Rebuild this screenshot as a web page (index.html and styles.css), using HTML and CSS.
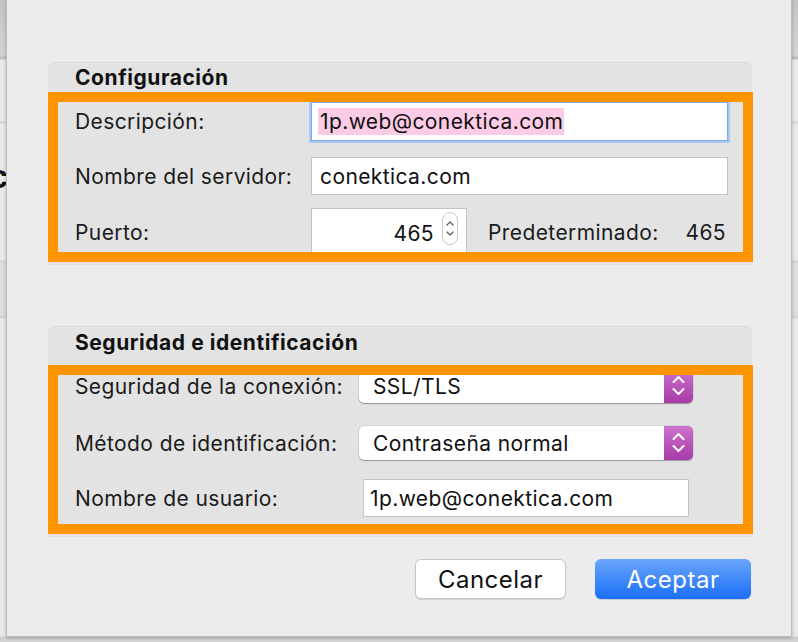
FILE: index.html
```html
<!DOCTYPE html>
<html lang="es">
<head>
<meta charset="utf-8">
<title>Configuración</title>
<link rel="stylesheet" href="styles.css">
</head>
<body>
<div class="under-c">c</div>
<div class="sheet">
  <section class="group g1">
    <h2 class="group-title">Configuración</h2>
    <div class="hl hl1">
      <div class="row row-desc">
        <span class="label">Descripción:</span>
        <div class="field focus"><span class="sel">1p.web@conektica.com</span></div>
      </div>
      <div class="row row-server">
        <span class="label">Nombre del servidor:</span>
        <div class="field">conektica.com</div>
      </div>
      <div class="row row-port">
        <span class="label">Puerto:</span>
        <div class="field port">
          <span class="num">465</span>
          <svg class="stepper" width="16" height="33" viewBox="0 0 16 33">
            <rect x="0.5" y="0.5" width="15" height="32" rx="7.5" fill="#fff" stroke="#c9c9c9"/>
            <path d="M5 13 L8 10 L11 13" fill="none" stroke="#5a5a5a" stroke-width="1.2" stroke-linecap="round" stroke-linejoin="round"/>
            <path d="M5 20 L8 23 L11 20" fill="none" stroke="#5a5a5a" stroke-width="1.2" stroke-linecap="round" stroke-linejoin="round"/>
          </svg>
        </div>
        <span class="default">Predeterminado:</span>
        <span class="defnum">465</span>
      </div>
    </div>
  </section>

  <section class="group g2">
    <h2 class="group-title">Seguridad e identificación</h2>
    <div class="hl hl2">
      <div class="row row-sec">
        <span class="label">Seguridad de la conexión:</span>
        <div class="popup">
          <span class="popup-text">SSL/TLS</span>
          <span class="arrows">
            <svg width="29" height="34" viewBox="0 0 29 34">
              <path d="M9.5 13 L14.5 8 L19.5 13" fill="none" stroke="#fff" stroke-width="2" stroke-linecap="round" stroke-linejoin="round"/>
              <path d="M9.5 20 L14.5 25 L19.5 20" fill="none" stroke="#fff" stroke-width="2" stroke-linecap="round" stroke-linejoin="round"/>
            </svg>
          </span>
        </div>
      </div>
      <div class="row row-auth">
        <span class="label">Método de identificación:</span>
        <div class="popup">
          <span class="popup-text">Contraseña normal</span>
          <span class="arrows">
            <svg width="29" height="34" viewBox="0 0 29 34">
              <path d="M9.5 13 L14.5 8 L19.5 13" fill="none" stroke="#fff" stroke-width="2" stroke-linecap="round" stroke-linejoin="round"/>
              <path d="M9.5 20 L14.5 25 L19.5 20" fill="none" stroke="#fff" stroke-width="2" stroke-linecap="round" stroke-linejoin="round"/>
            </svg>
          </span>
        </div>
      </div>
      <div class="row row-user">
        <span class="label">Nombre de usuario:</span>
        <div class="field user">1p.web@conektica.com</div>
      </div>
    </div>
  </section>

  <div class="actions">
    <button class="btn btn-cancel">Cancelar</button>
    <button class="btn btn-ok">Aceptar</button>
  </div>
</div>
</body>
</html>
```

FILE: styles.css
```css
* { box-sizing: border-box; }

html, body { margin: 0; padding: 0; }

body {
  width: 798px;
  height: 642px;
  overflow: hidden;
  position: relative;
  font-family: Inter, "Noto Sans", "Liberation Sans", sans-serif;
  color: #1b1b1b;
  background: linear-gradient(to bottom,
    #c4c4c4 0, #d3d3d3 56px, #bcbcbc 57px, #bcbcbc 59px, #e9e9e9 60px,
    #e9e9e9 121px, #cdcdcd 122px, #e9e9e9 124px,
    #e9e9e9 260px, #cfcfcf 261px, #dddddd 263px, #dddddd 316px,
    #cbcbcb 317px, #e9e9e9 319px, #e9e9e9 636px, #cfcfcf 637px, #d4d4d4 642px);
}

.under-c {
  position: absolute;
  left: -11px;
  top: 156px;
  font-family: "Liberation Sans", sans-serif;
  font-weight: 700;
  font-size: 34px;
  line-height: 40px;
  color: #111;
}

.sheet {
  position: relative;
  margin-left: 6px;
  width: 786px;
  height: 637px;
  background: #ececec;
  border: 1px solid #bdbdbd;
  border-top: none;
  box-shadow: 0 1px 3px rgba(0, 0, 0, 0.25);
  padding: 62px 39px 0 41px;
}

.group {
  background: #e3e3e3;
  border-top: 1px solid #d9d9d9;
  border-radius: 7px 7px 0 0;
  box-shadow: 0 1px 1px rgba(0, 0, 0, 0.06);
}

.g1 { height: 202px; }
.g2 { height: 210px; margin-top: 62px; }

.group-title {
  margin: 0;
  padding-left: 27px;
  font-size: 21px;
  letter-spacing: 0.55px;
  font-weight: 700;
  color: #111;
}
.g1 .group-title { height: 29px; line-height: 29px; }
.g2 .group-title { height: 38px; line-height: 31px; }

.hl {
  border: 10px solid #fe9400;
  margin-right: -1px;
  overflow: hidden;
  padding: 0 15px 0 17px;
}
.hl1 { height: 170px; }
.hl2 { height: 169px; }

.row {
  display: flex;
  align-items: center;
  font-size: 21px;
  letter-spacing: 0.4px;
}

.label { flex: none; }

.hl1 .label { width: 236px; }
.hl2 .label { width: 284px; }

.row-desc { height: 39px; }
.row-server { height: 38px; margin-top: 16px; }
.row-port { height: 50px; margin-top: 13px; align-items: flex-start; }
.row-port .label, .row-port .default, .row-port .defnum { line-height: 50px; }

.field {
  height: 100%;
  flex: 1;
  display: flex;
  align-items: center;
  background: #fff;
  border: 1px solid #c4c4c4;
  padding-left: 8px;
  color: #111;
}

.field.focus {
  border-color: #7ea9e8;
  box-shadow: 0 0 0 2px #a9c9f4;
  padding-left: 6px;
}

.sel {
  background: #fccbe5;
  padding: 3px 1px 3px 2px;
  line-height: 21px;
}

.field.port {
  flex: none;
  width: 156px;
  justify-content: flex-end;
  align-items: flex-start;
  padding: 2px 8px 0 0;
}
.port .num { line-height: 46px; margin-right: 8px; }
.port .stepper { margin-top: 1px; }

.default { margin-left: 21px; }
.defnum { margin-left: auto; margin-right: 2px; }

.row-sec { height: 34px; margin-top: -6px; }
.row-auth { height: 34px; margin-top: 23px; }
.row-user { height: 38px; margin-top: 19px; }

.popup {
  width: 334px;
  height: 34px;
  display: flex;
  align-items: center;
  background: #fff;
  border-radius: 5px;
  box-shadow: 0 1px 1px rgba(0, 0, 0, 0.3), 0 0 0 0.5px rgba(0, 0, 0, 0.12);
}
.popup-text { padding-left: 14px; flex: 1; color: #111; }
.arrows {
  width: 29px;
  height: 34px;
  border-radius: 0 5px 5px 0;
  background: linear-gradient(to bottom, #cc72cc, #a73ba8);
  display: flex;
}

.field.user {
  flex: none;
  width: 326px;
  margin-left: 4px;
  padding-left: 6px;
}

.actions {
  display: flex;
  justify-content: flex-end;
  gap: 29px;
  margin-top: 23px;
  margin-right: 1px;
}

.btn {
  font-family: Inter, "Noto Sans", "Liberation Sans", sans-serif;
  font-size: 24px;
  letter-spacing: 0.5px;
  height: 40px;
  border-radius: 6px;
  padding: 0;
  cursor: default;
}
.btn-cancel {
  width: 151px;
  background: #fff;
  color: #111;
  border: 1px solid #c6c6c6;
  box-shadow: 0 1px 1px rgba(0, 0, 0, 0.12);
}
.btn-ok {
  width: 156px;
  color: #fff;
  border: none;
  background: linear-gradient(to bottom, #6aa6fb, #1a6ef8);
  box-shadow: 0 1px 1px rgba(0, 0, 0, 0.15);
}
```
